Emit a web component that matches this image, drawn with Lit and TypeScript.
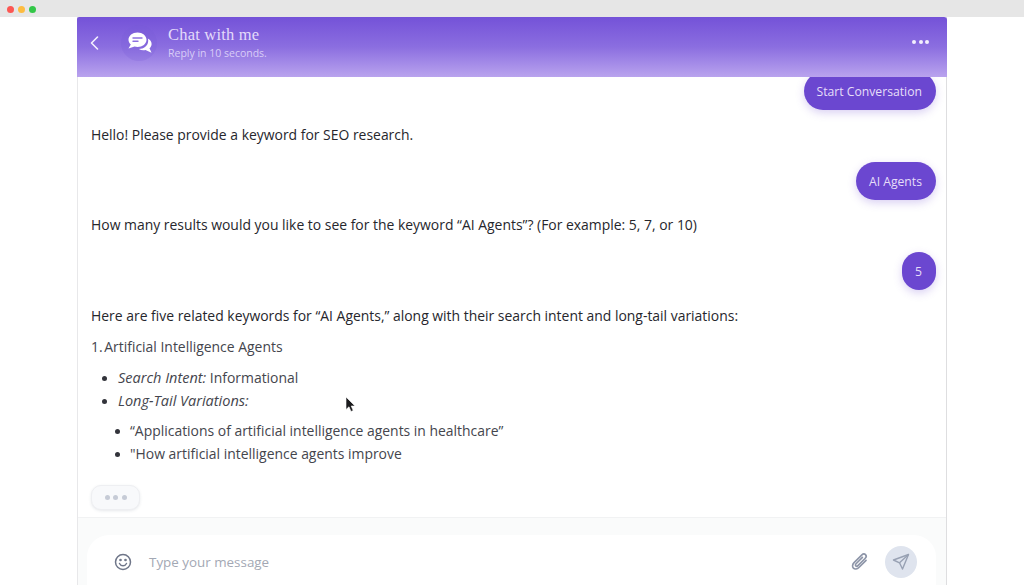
import { LitElement, html, css } from "lit";
import { customElement } from "lit/decorators.js";

@customElement("app-root")
export class AppRoot extends LitElement {
  static styles = css`
    :host {
      display: flex;
      flex-direction: column;
      width: 1024px;
      height: 585px;
      overflow: hidden;
      background: #fff;
      font-family: "Open Sans", "Noto Sans", sans-serif;
      color: #2b2b33;
      position: relative;
    }
    .topbar {
      flex: 0 0 17px;
      height: 17px;
      background: #e6e6e6;
      display: flex;
      align-items: center;
      gap: 4px;
      padding: 1px 0 0 7px;
      box-sizing: border-box;
    }
    .dot { width: 7px; height: 7px; border-radius: 50%; }
    .r { background: #fc5753; }
    .y { background: #fdbc40; }
    .g { background: #33c748; }
    .window {
      flex: 1;
      min-height: 0;
      width: 870px;
      margin-left: 77px;
      box-sizing: border-box;
      border-left: 1px solid #e8e8ea;
      border-right: 1px solid #dedee0;
      display: flex;
      flex-direction: column;
      background: #fff;
    }
    .header {
      flex: 0 0 60px;
      box-sizing: border-box;
      margin: 0 -1px;
      padding-bottom: 8px;
      background: linear-gradient(180deg, #7452d8 0%, #8b6ee0 50%, #b9a3ee 100%);
      display: flex;
      align-items: center;
      position: relative;
      z-index: 2;
      color: #fff;
      border-top-right-radius: 3px;
      border-top-left-radius: 2px;
    }
    .back { margin-left: 12px; width: 12px; height: 16px; display: block; }
    .avatar {
      margin-left: 20px;
      width: 36px;
      height: 36px;
      border-radius: 50%;
      background: rgba(120, 90, 215, 0.22);
      display: flex;
      align-items: center;
      justify-content: center;
    }
    .avatar svg { margin-left: 2px; }
    .titles { margin-left: 11px; flex: 1; padding-top: 1px; }
    .title {
      font-family: "Liberation Serif", "DejaVu Serif", serif;
      font-size: 16.5px;
      letter-spacing: 0.2px;
      line-height: 20px;
      color: #e4dbfa;
    }
    .sub { font-size: 10.5px; line-height: 17px; color: #d9cdf7; }
    .more { display: flex; gap: 2.5px; margin: -2px 18px 0 0; }
    .more i { width: 4px; height: 4px; border-radius: 50%; background: #f3effd; }
    .messages {
      flex: 1;
      min-height: 0;
      overflow: hidden;
      padding: 0 10px 0 13px;
      display: flex;
      flex-direction: column;
      font-size: 13.93px;
    }
    .bubble {
      align-self: flex-end;
      height: 38px;
      display: flex;
      align-items: center;
      padding: 0 14px 0 13px;
      background: #6b47d0;
      color: #e6def9;
      border-radius: 19px;
      font-size: 12.2px;
      box-shadow: 0 3px 8px rgba(107, 71, 208, 0.25);
      flex: none;
    }
    .first { margin-top: -5px; }
    .line { line-height: 22px; white-space: nowrap; color: #26262c; }
    .l1 { margin-top: 14px; margin-bottom: 16px; }
    .l2 { margin-top: 14px; margin-bottom: 16px; }
    .l3 { margin-top: 15px; }
    .num { margin-top: 9px; color: #44454d; }
    .marker { margin-right: -2px; }
    ul { margin: 0; padding: 0; list-style: none; color: #44454d; }
    li { line-height: 22.5px; white-space: nowrap; position: relative; }
    li::before {
      content: "";
      position: absolute;
      width: 5px;
      height: 5px;
      border-radius: 50%;
      background: #33343b;
      top: 9px;
    }
    .outer { margin-top: 9px; padding-left: 27px; }
    .outer li::before { left: -16px; }
    .inner { margin-top: 8px; padding-left: 39px; }
    .inner li::before { left: -15px; }
    em { font-style: italic; font-size: 14.5px; }
    .typing {
      margin-top: 20px;
      width: 49px;
      height: 25px;
      box-sizing: border-box;
      border: 1px solid #eeeff2;
      border-radius: 10px;
      background: #f8f9fb;
      box-shadow: 0 1px 3px rgba(60, 70, 100, 0.12);
      display: flex;
      align-items: center;
      justify-content: center;
      gap: 3.5px;
      flex: none;
    }
    .typing i { width: 5px; height: 5px; border-radius: 50%; background: #c6cbd6; }
    .footer {
      flex: 0 0 68px;
      box-sizing: border-box;
      border-top: 1px solid #f1f2f3;
      background: #fafbfb;
      padding: 17px 10px 0 9px;
      overflow: hidden;
    }
    .input {
      height: 70px;
      background: #fff;
      border-radius: 22px;
      display: flex;
      align-items: flex-start;
      padding: 10px 19px 0 26px;
      box-sizing: border-box;
    }
    .smile { width: 20px; height: 20px; margin-top: 7px; display: block; flex: none; }
    .ph { margin-left: 16px; flex: 1; font-size: 13.4px; line-height: 34px; color: #a3a8b4; }
    .clip { width: 22px; height: 22px; margin-top: 6px; margin-right: 14px; display: block; flex: none; }
    .send {
      width: 32px;
      height: 32px;
      margin-top: 1px;
      border-radius: 50%;
      background: #dfe4ee;
      display: flex;
      align-items: center;
      justify-content: center;
      flex: none;
    }
    .cursor { position: absolute; left: 345px; top: 396px; width: 11px; height: 18px; display: block; }
  `;

  render() {
    return html`
      <div class="topbar"><span class="dot r"></span><span class="dot y"></span><span class="dot g"></span></div>
      <div class="window">
        <div class="header">
          <svg class="back" viewBox="0 0 12 16" fill="none" stroke="#f4f0fe" stroke-width="1.600" stroke-linecap="round" stroke-linejoin="round"><path d="M8.500 2 2.500 8l6 6"/></svg>
          <div class="avatar">
            <svg width="26" height="24" viewBox="0 0 26 24">
              <path fill="#fff" d="M10.500 1.500c5 0 9 3.200 9 7.300s-4 7.200-9 7.200c-1 0-2-.1-2.900-.4L1.500 17.500l2.300-3.900C2.300 12.300 1.500 10.600 1.500 8.800c0-4.100 4-7.300 9-7.300Z"/>
              <path fill="#fff" d="M20.800 7.500c2.300 1.100 3.800 3.100 3.800 5.400 0 1.700-.8 3.200-2.100 4.300l2 4.600-6-2.700c-.7.2-1.400.2-2.100.2-1.700 0-3.200-.4-4.500-1.200 4.800-.1 9.300-3.300 9.300-8.300 0-.8-.1-1.600-.4-2.300Z"/>
              <path stroke="#8d70e0" stroke-width="1.400" stroke-linecap="round" d="M6 7h9M6 10.200h5"/>
            </svg>
          </div>
          <div class="titles">
            <div class="title">Chat with me</div>
            <div class="sub">Reply in 10 seconds.</div>
          </div>
          <div class="more"><i></i><i></i><i></i></div>
        </div>
        <div class="messages">
          <div class="bubble first">Start Conversation</div>
          <div class="line l1">Hello! Please provide a keyword for SEO research.</div>
          <div class="bubble">AI Agents</div>
          <div class="line l2">How many results would you like to see for the keyword “AI Agents”? (For example: 5, 7, or 10)</div>
          <div class="bubble">5</div>
          <div class="line l3">Here are five related keywords for “AI Agents,” along with their search intent and long-tail variations:</div>
          <div class="line num"><span class="marker">1.</span> Artificial Intelligence Agents</div>
          <ul class="outer">
            <li><em>Search Intent:</em> Informational</li>
            <li><em>Long-Tail Variations:</em></li>
          </ul>
          <ul class="inner">
            <li>“Applications of artificial intelligence agents in healthcare”</li>
            <li>"How artificial intelligence agents improve</li>
          </ul>
          <div class="typing"><i></i><i></i><i></i></div>
        </div>
        <div class="footer">
          <div class="input">
            <svg class="smile" viewBox="0 0 20 20" fill="none" stroke="#6f7689" stroke-width="1.500" stroke-linecap="round"><circle cx="10" cy="10" r="7.500"/><path d="M6.500 11.500c.8 1.600 2 2.300 3.500 2.300s2.700-.7 3.500-2.300"/><circle cx="7.500" cy="8" r=".6" fill="#6f7689"/><circle cx="12.500" cy="8" r=".6" fill="#6f7689"/></svg>
            <div class="ph">Type your message</div>
            <svg class="clip" viewBox="0 0 20 20" fill="none" stroke="#8d95a8" stroke-width="1.500" stroke-linecap="round" stroke-linejoin="round"><path d="M15.500 8.500 9 15c-1.600 1.600-3.800 1.800-5 .6s-1-3.400.6-5l6.900-6.900c1.100-1.100 2.600-1.300 3.500-.4s.7 2.400-.4 3.500l-6.500 6.500c-.6.600-1.400.7-1.900.2s-.4-1.300.2-1.900l5.800-5.800"/></svg>
            <div class="send">
              <svg width="18" height="18" viewBox="0 0 18 18" fill="none" stroke="#98a1b3" stroke-width="1.400" stroke-linejoin="round"><path d="M16.500 1.500 1.500 7l6 2.800 3 6.200 6-14.500Z"/><path d="M16.500 1.500 7.500 9.800"/></svg>
            </div>
          </div>
        </div>
      </div>
      <svg class="cursor" viewBox="0 0 11 18"><path fill="#1b1b1d" stroke="#fff" stroke-width=".6" d="M1 1v12.500l3-2.700 2 4.700 2.200-1-2-4.500h3.800L1 1Z"/></svg>
    `;
  }
}
